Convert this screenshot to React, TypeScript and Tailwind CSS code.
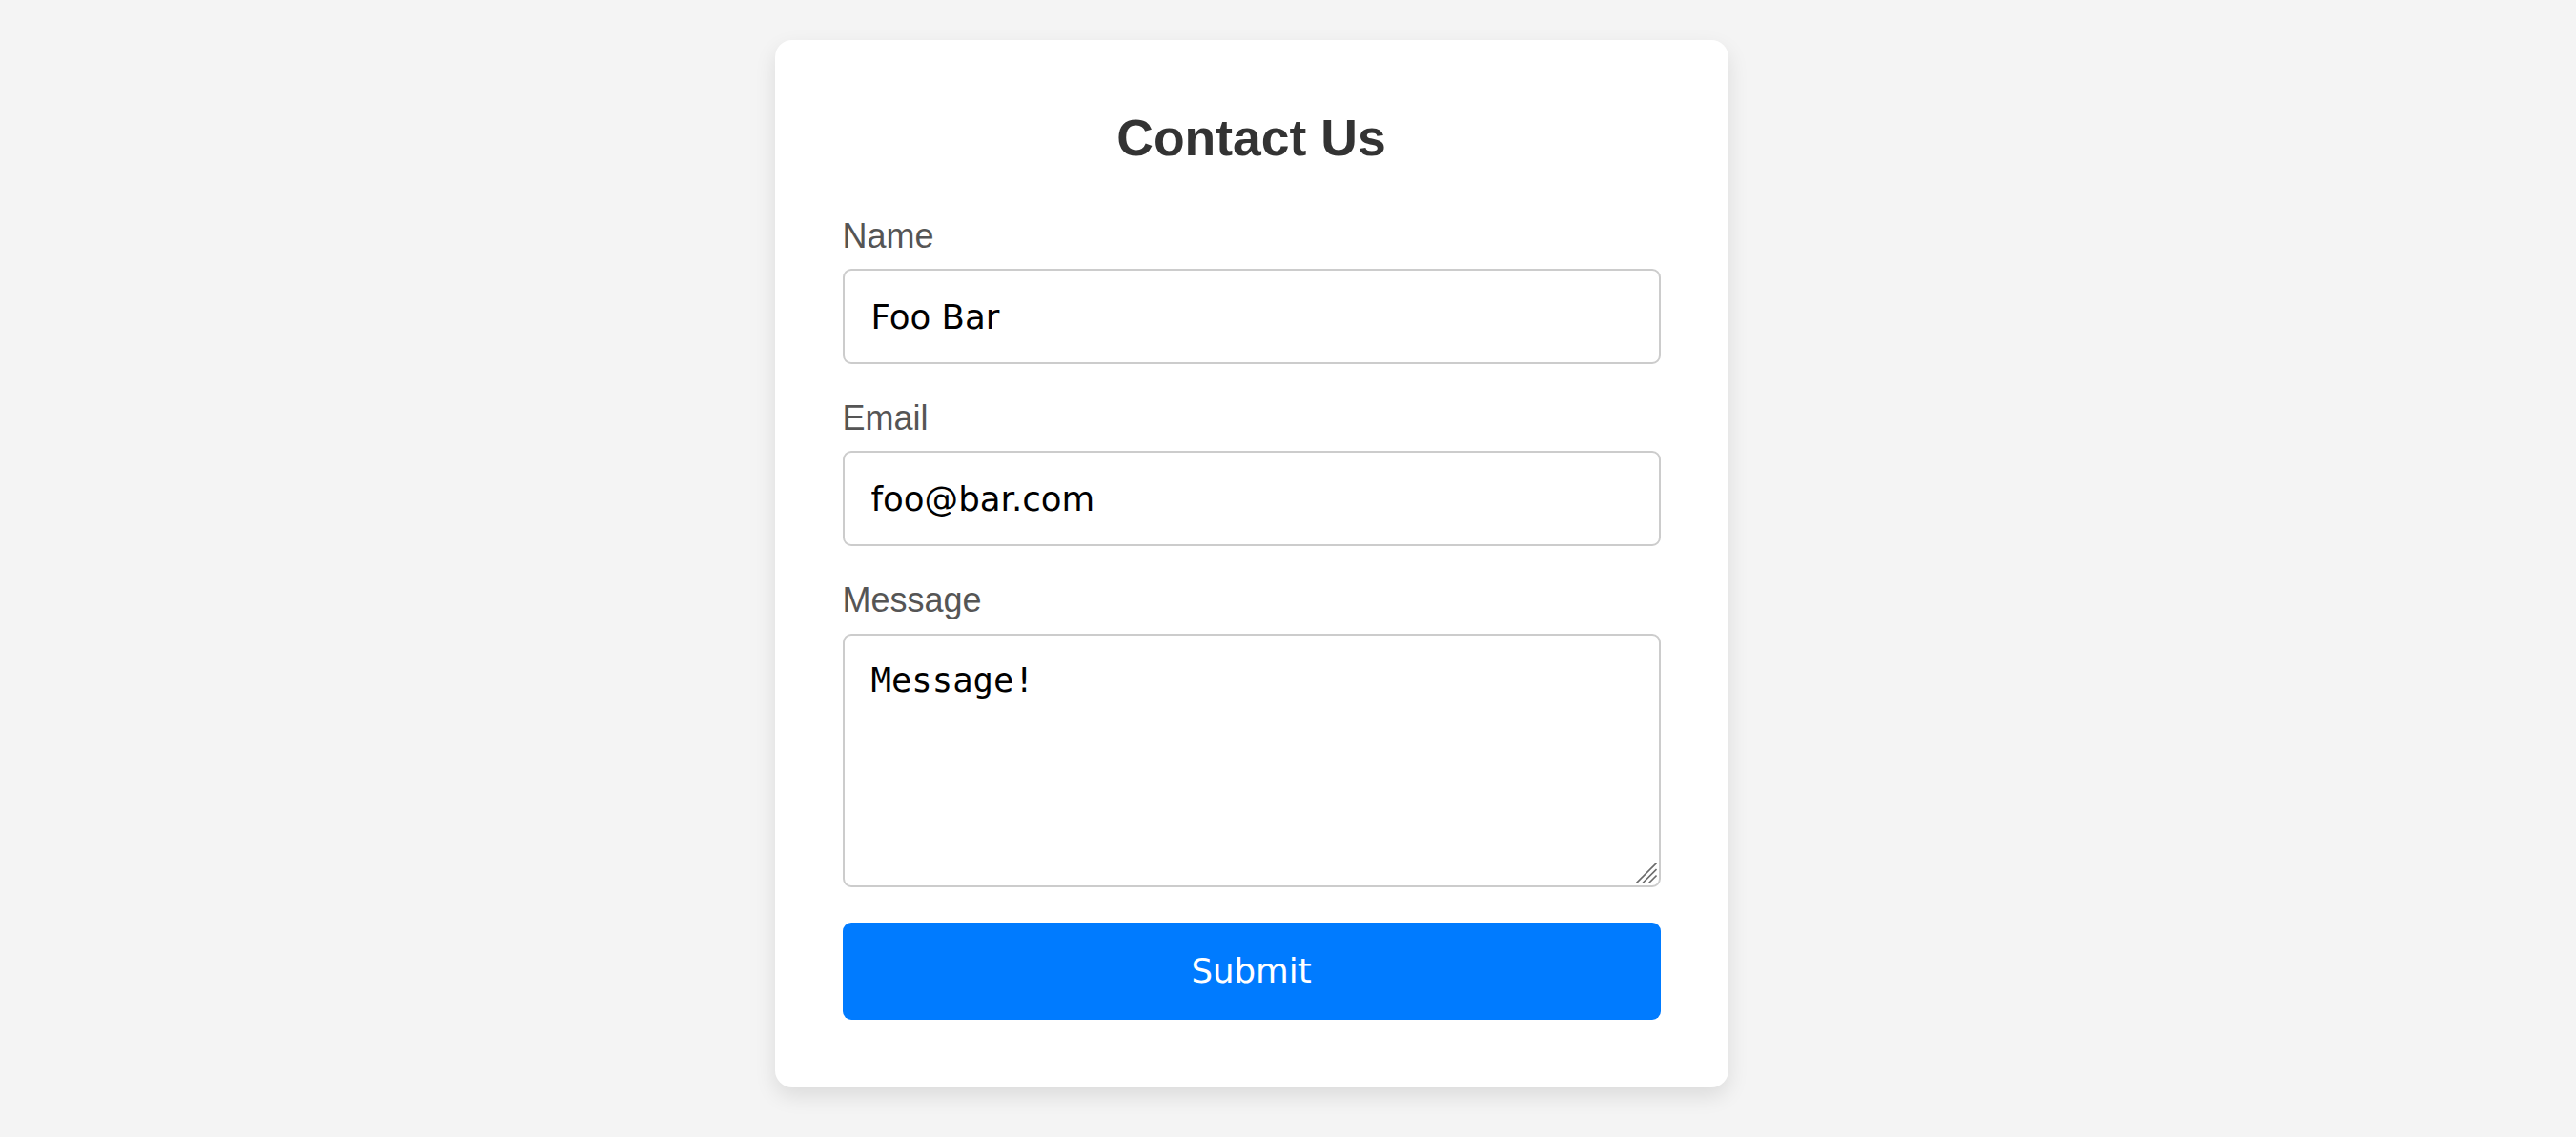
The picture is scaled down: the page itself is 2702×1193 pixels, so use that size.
const labelCls = "block text-[36px] leading-[40px] text-[#555] font-['Liberation_Sans',Arial,sans-serif]"
const fieldCls =
  "block w-full border-2 border-[#ccc] rounded-[9px] bg-white pl-[28px] pr-[26px] text-[35.6px] text-black outline-none"

const ContactForm = () => {
  return (
    <div className="min-h-screen w-full bg-[#f4f4f4] flex justify-center items-start pr-[77px]">
      <div className="mt-[42px] w-[1000px] bg-white rounded-[18px] shadow-[0_9px_22px_rgba(0,0,0,0.1)] px-[71px] pt-[73px] pb-[71px]">
        <h2 className="text-center text-[53.5px] leading-[60px] font-bold text-[#333] font-['Liberation_Sans',Arial,sans-serif] mb-[53px]">
          Contact Us
        </h2>

        <form onSubmit={(e) => e.preventDefault()} className="flex flex-col">
          <label className={labelCls}>Name</label>
          <input
            type="text"
            defaultValue="Foo Bar"
            className={`${fieldCls} mt-[14px] h-[100px] font-['DejaVu_Sans',sans-serif]`}
          />

          <label className={`${labelCls} mt-[37px]`}>Email</label>
          <input
            type="email"
            defaultValue="foo@bar.com"
            className={`${fieldCls} mt-[14px] h-[100px] font-['DejaVu_Sans',sans-serif]`}
          />

          <label className={`${labelCls} mt-[37px]`}>Message</label>
          <div className="relative mt-[15px]">
            <textarea
              defaultValue="Message!"
              className={`${fieldCls} h-[266px] py-[26px] resize-none leading-[41px] font-['DejaVu_Sans_Mono',monospace]`}
            />
            {/* resize grip */}
            <svg
              className="absolute right-[4px] bottom-[4px] pointer-events-none"
              width="22"
              height="22"
              viewBox="0 0 22 22"
            >
              <line x1="0.5" y1="21.5" x2="21.5" y2="0.5" stroke="#6b6b6b" strokeWidth="1.6" />
              <line x1="7" y1="21.5" x2="21.5" y2="7" stroke="#6b6b6b" strokeWidth="1.6" />
              <line x1="13.5" y1="21.5" x2="21.5" y2="13.5" stroke="#6b6b6b" strokeWidth="1.6" />
            </svg>
          </div>

          <button
            type="submit"
            className="mt-[37px] h-[102px] w-full rounded-[9px] bg-[#007bff] text-white text-[35.6px] font-['DejaVu_Sans',sans-serif]"
          >
            Submit
          </button>
        </form>
      </div>
    </div>
  )
}

export default function App() {
  return <ContactForm />
}
